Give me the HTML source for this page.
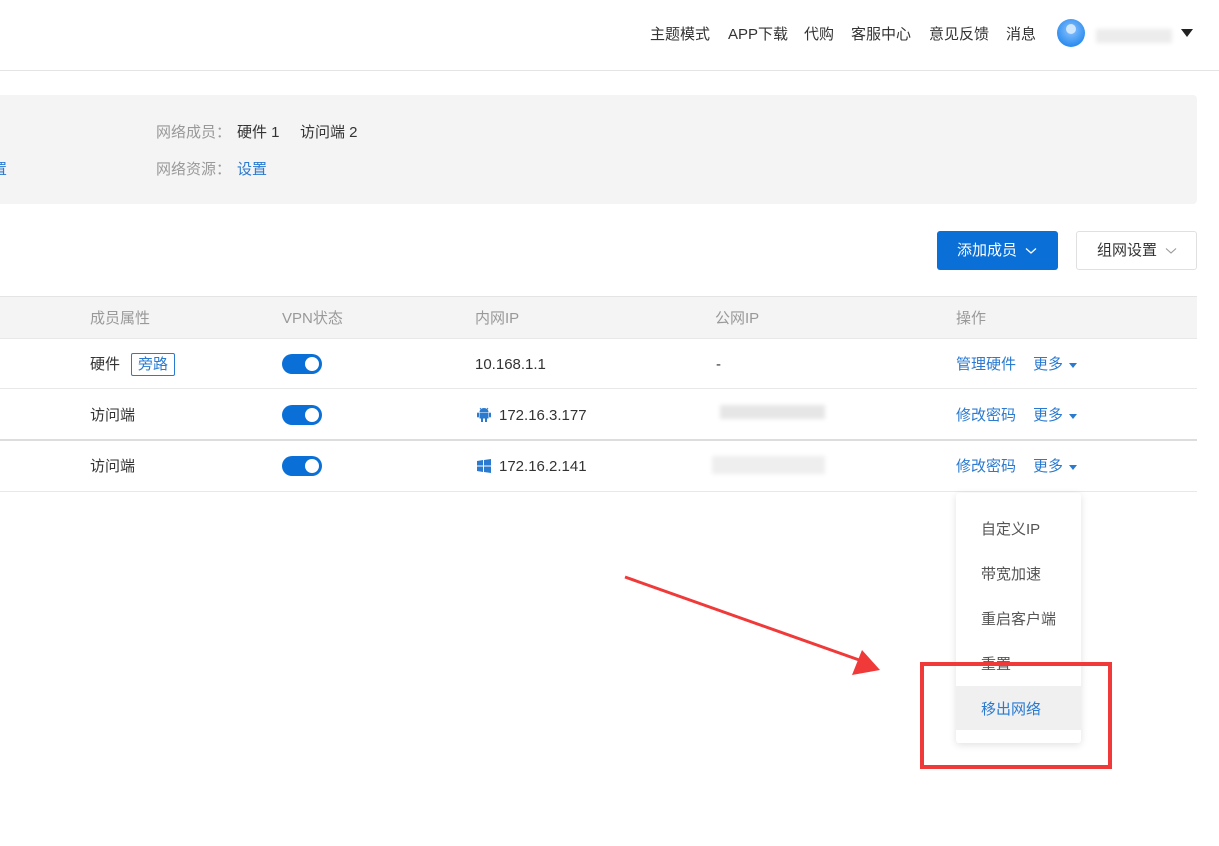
<!DOCTYPE html>
<html><head><meta charset="utf-8"><style>
body{margin:0;width:1219px;height:846px;background:#fff;font-family:"Liberation Sans","Noto Sans CJK SC",sans-serif;font-size:15px;color:#333;position:relative;overflow:hidden}
.a{position:absolute;white-space:nowrap;line-height:20px}
.t{margin-top:2px}
.blue{color:#2a7ad0}
.gray{color:#999}
.tog{position:absolute;width:40px;height:20px;border-radius:10px;background:#0a6fd6}
.tog::after{content:"";position:absolute;right:3px;top:3px;width:14px;height:14px;border-radius:50%;background:#fff}
.blur{position:absolute;background:#e6e6e6;filter:blur(2px)}
.tri{display:inline-block;width:0;height:0;border-left:4px solid transparent;border-right:4px solid transparent;border-top:5px solid #2a7ad0;vertical-align:middle;margin-left:6px}
</style></head><body>
<div class="a t" style="top:23px;left:650px">主题模式</div>
<div class="a t" style="top:23px;left:728px">APP下载</div>
<div class="a t" style="top:23px;left:804px">代购</div>
<div class="a t" style="top:23px;left:851px">客服中心</div>
<div class="a t" style="top:23px;left:929px">意见反馈</div>
<div class="a t" style="top:23px;left:1006px">消息</div>
<div class="a" style="top:19px;left:1057px;width:28px;height:28px;border-radius:50%;background:radial-gradient(circle at 50% 40%,#8cc4ff,#2f8ef0 70%)"></div>
<div class="a" style="top:24px;left:1066px;width:10px;height:10px;border-radius:50%;background:#cfe6ff"></div>
<div class="blur" style="top:29px;left:1096px;width:76px;height:14px;background:#ececec"></div>
<div class="a" style="top:29px;left:1181px;width:0;height:0;border-left:6px solid transparent;border-right:6px solid transparent;border-top:8px solid #222"></div>
<div class="a" style="top:70px;left:0;width:1219px;height:1px;background:#e4e4e4"></div>
<div class="a" style="top:95px;left:0;width:1197px;height:109px;background:#f4f4f4;border-radius:0 4px 4px 0"></div>
<div class="a gray t" style="top:121px;left:156px">网络成员：</div>
<div class="a t" style="top:121px;left:237px">硬件 1</div>
<div class="a t" style="top:121px;left:300px">访问端 2</div>
<div class="a gray t" style="top:158px;left:156px">网络资源：</div>
<div class="a blue t" style="top:158px;left:237px">设置</div>
<div class="a blue t" style="top:158px;left:-8px">置</div>
<div class="a" style="top:231px;left:937px;width:121px;height:39px;background:#0a6fd6;border-radius:3px;color:#fff;line-height:39px;text-indent:20px">添加成员<svg width="12" height="8" style="margin-left:8px" viewBox="0 0 12 8"><path d="M1 1.5 L6 6 L11 1.5" stroke="#fff" fill="none" stroke-width="1.3"/></svg></div>
<div class="a" style="top:231px;left:1076px;width:119px;height:37px;border:1px solid #e0e0e0;border-radius:3px;line-height:37px;text-indent:20px">组网设置<svg width="12" height="8" style="margin-left:8px" viewBox="0 0 12 8"><path d="M1 1.5 L6 6 L11 1.5" stroke="#999" fill="none" stroke-width="1.1"/></svg></div>
<div class="a" style="top:296px;left:0;width:1197px;height:41px;background:#f4f4f4;border-top:1px solid #e4e4e4;border-bottom:1px solid #e8e8e8"></div>
<div class="a gray t" style="top:307px;left:90px">成员属性</div>
<div class="a gray t" style="top:307px;left:282px">VPN状态</div>
<div class="a gray t" style="top:307px;left:475px">内网IP</div>
<div class="a gray t" style="top:307px;left:715px">公网IP</div>
<div class="a gray t" style="top:307px;left:956px">操作</div>
<div class="a" style="top:388px;left:0;width:1197px;height:1px;background:#e8e8e8"></div>
<div class="a" style="top:439px;left:0;width:1197px;height:2px;background:#ddd"></div>
<div class="a" style="top:491px;left:0;width:1197px;height:1px;background:#e8e8e8"></div>
<div class="a t" style="top:353px;left:90px">硬件</div>
<div class="a blue" style="top:353px;left:131px;border:1px solid #2a7ad0;border-radius:2px;padding:0 6px;line-height:21px">旁路</div>
<div class="tog" style="top:354px;left:282px"></div>
<div class="a t" style="top:353px;left:475px">10.168.1.1</div>
<div class="a t" style="top:353px;left:716px">-</div>
<div class="a blue t" style="top:353px;left:956px">管理硬件</div>
<div class="a blue t" style="top:353px;left:1033px">更多<span class="tri"></span></div>
<div class="a t" style="top:404px;left:90px">访问端</div>
<div class="tog" style="top:405px;left:282px"></div>
<svg class="a" style="top:406px;left:477px" width="14" height="16" viewBox="0 0 14 16"><path d="M3 2 L4.5 4 M11 2 L9.5 4" stroke="#2a7ad0"/><path d="M2.5 6 A4.5 4 0 0 1 11.5 6 Z" fill="#2a7ad0"/><rect x="2.5" y="6.5" width="9" height="6" fill="#2a7ad0"/><rect x="0" y="6.5" width="2" height="5" rx="1" fill="#2a7ad0"/><rect x="12" y="6.5" width="2" height="5" rx="1" fill="#2a7ad0"/><rect x="4" y="12" width="2" height="4" fill="#2a7ad0"/><rect x="8" y="12" width="2" height="4" fill="#2a7ad0"/></svg>
<div class="a t" style="top:404px;left:499px">172.16.3.177</div>
<div class="blur" style="top:405px;left:720px;width:105px;height:14px"></div>
<div class="a blue t" style="top:404px;left:956px">修改密码</div>
<div class="a blue t" style="top:404px;left:1033px">更多<span class="tri"></span></div>
<div class="a t" style="top:455px;left:90px">访问端</div>
<div class="tog" style="top:456px;left:282px"></div>
<svg class="a" style="top:459px;left:477px" width="14" height="14" viewBox="0 0 14 14"><path d="M0 2 L6 1 V6.5 H0Z M7 1 L14 0 V6.5 H7Z M0 7.5 H6 V13 L0 12Z M7 7.5 H14 V14 L7 13Z" fill="#2a7ad0"/></svg>
<div class="a t" style="top:455px;left:499px">172.16.2.141</div>
<div class="blur" style="top:456px;left:712px;width:113px;height:18px;background:#eee"></div>
<div class="a blue t" style="top:455px;left:956px">修改密码</div>
<div class="a blue t" style="top:455px;left:1033px">更多<span class="tri"></span></div>
<div class="a" style="top:493px;left:956px;width:125px;height:250px;background:#fff;border-radius:3px;box-shadow:0 2px 8px rgba(0,0,0,0.12)"></div>
<div class="a" style="top:686px;left:956px;width:125px;height:44px;background:#f0f0f0"></div>
<div class="a t" style="top:518px;left:981px;color:#555">自定义IP</div>
<div class="a t" style="top:563px;left:981px;color:#555">带宽加速</div>
<div class="a t" style="top:608px;left:981px;color:#555">重启客户端</div>
<div class="a t" style="top:653px;left:981px;color:#555">重置</div>
<div class="a blue t" style="top:698px;left:981px">移出网络</div>
<div class="a" style="top:662px;left:920px;width:184px;height:99px;border:4px solid #f03a3a"></div>
<svg class="a" style="top:0;left:0" width="1219" height="846"><line x1="625" y1="577" x2="862" y2="661" stroke="#f03a3a" stroke-width="3"/><polygon points="880,670 852,675 862,650" fill="#f03a3a"/></svg>
</body></html>
